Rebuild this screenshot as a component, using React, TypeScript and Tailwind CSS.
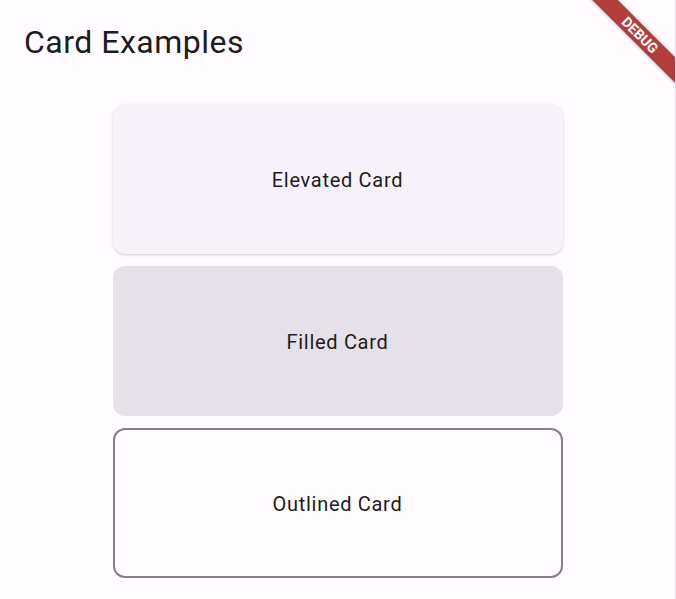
import React from "react";

const cards = [
  { label: "Elevated Card", kind: "elevated" },
  { label: "Filled Card", kind: "filled" },
  { label: "Outlined Card", kind: "outlined" },
];

const cardClass: Record<string, string> = {
  elevated:
    "bg-[#f7f2fa] shadow-[0_1px_3px_rgba(0,0,0,0.12),0_1px_2px_rgba(0,0,0,0.08)]",
  filled: "bg-[#e6e0e9]",
  outlined: "border-2 border-[#847f89]",
};

export default function App() {
  return (
    <div
      className="relative w-[676px] h-[599px] overflow-hidden bg-[#fffbfe] border-r border-[#e4e0e6] text-[#1d1b20]"
      style={{ fontFamily: "Roboto, 'Noto Sans', sans-serif" }}
    >
      {/* App bar */}
      <div className="h-[83px] flex items-center px-6">
        <h1 className="text-[32px] leading-none font-normal tracking-[0.5px]">Card Examples</h1>
      </div>

      {/* Cards */}
      <div className="flex flex-col items-center gap-3 pt-[21px]">
        {cards.map((card) => (
          <div
            key={card.kind}
            className={`w-[450px] h-[150px] rounded-xl flex items-center justify-center pt-[2px] ${cardClass[card.kind]}`}
          >
            <span className="text-[20px] tracking-[0.7px]">{card.label}</span>
          </div>
        ))}
      </div>

      {/* Debug banner */}
      <div className="absolute left-[560px] top-[26px] w-[160px] h-[18px] rotate-45 bg-[#b33c3c] shadow-[0_0_4px_rgba(0,0,0,0.3)] flex items-center justify-center">
        <span className="text-white text-[14px] font-bold leading-none">
          DEBUG
        </span>
      </div>
    </div>
  );
}
